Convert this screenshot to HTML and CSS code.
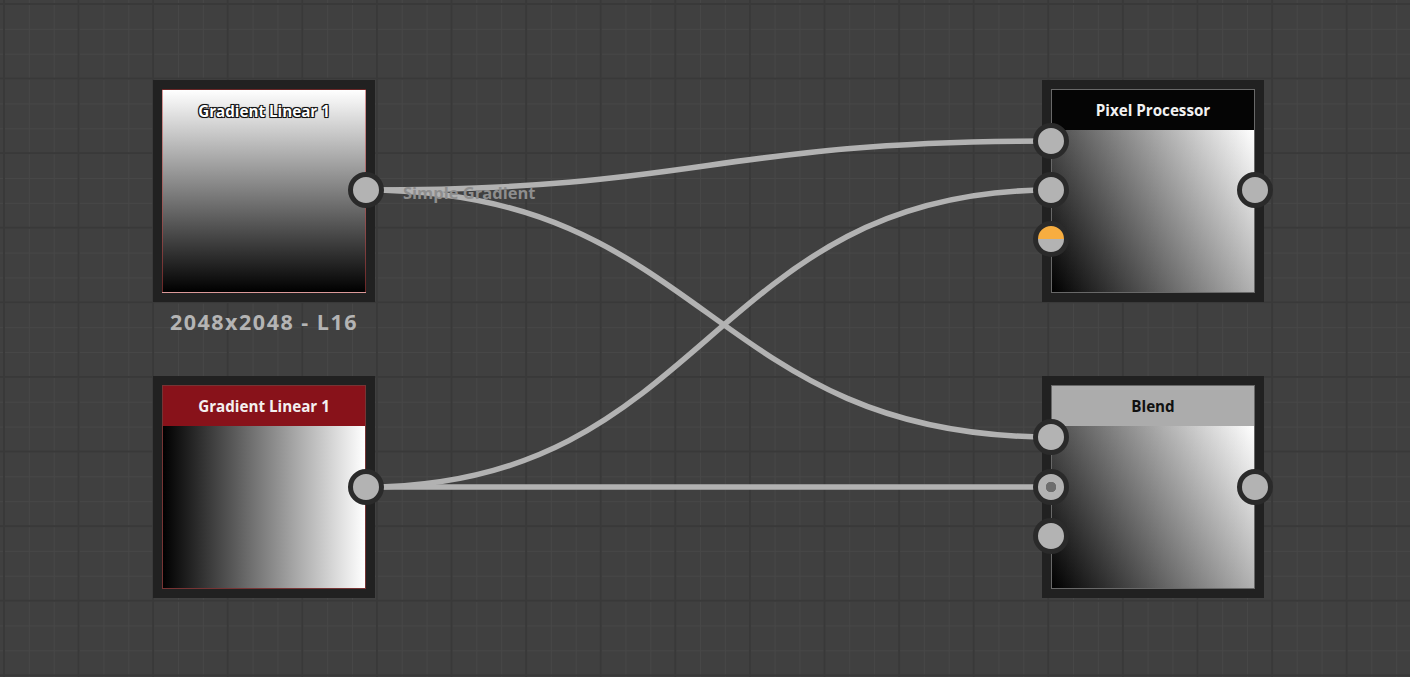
FILE: index.html
```html
<!DOCTYPE html>
<html>
<head>
<meta charset="utf-8">
<link rel="stylesheet" href="styles.css">
</head>
<body>
<div class="canvas">
  <svg class="wires" width="1410" height="677" viewBox="0 0 1410 677">
    <path d="M366 190 C708 190 708 141 1051 141"/>
    <path d="M366 190 C708 190 708 437 1051 437"/>
    <path d="M366 487 C708 487 708 190 1051 190"/>
    <path d="M366 487 L1051 487"/>
  </svg>

  <div class="wire-label">Simple Gradient</div>

  <div class="node n1">
    <div class="preview vgrad red-edge">
      <div class="title overlay">Gradient Linear 1</div>
    </div>
    <span class="socket s-out-mid"></span>
  </div>
  <div class="caption">2048x2048 - L16</div>

  <div class="node n2">
    <div class="body red-edge">
      <div class="header red">Gradient Linear 1</div>
      <div class="image hgrad"></div>
    </div>
    <span class="socket s-out-mid2"></span>
  </div>

  <div class="node n3">
    <div class="body grey-edge">
      <div class="header black">Pixel Processor</div>
      <div class="image dgrad"></div>
    </div>
    <span class="socket s-in1"></span>
    <span class="socket s-in2"></span>
    <span class="socket s-in3 half"></span>
    <span class="socket s-out-mid"></span>
  </div>

  <div class="node n4">
    <div class="body grey-edge">
      <div class="header light">Blend</div>
      <div class="image dgrad"></div>
    </div>
    <span class="socket s-in1"></span>
    <span class="socket s-in2b dot"></span>
    <span class="socket s-in3b"></span>
    <span class="socket s-out-mid2"></span>
  </div>
</div>
</body>
</html>
```

FILE: styles.css
```css
html, body {
  margin: 0;
  padding: 0;
  width: 1410px;
  height: 677px;
  overflow: hidden;
  background: #404040;
  font-family: "Open Sans", "Noto Sans", "DejaVu Sans", sans-serif;
}

.canvas {
  position: relative;
  width: 1410px;
  height: 677px;
  background-color: #404040;
  background-image:
    linear-gradient(to right, #393939 2px, transparent 2px),
    linear-gradient(to bottom, #393939 2px, transparent 2px),
    linear-gradient(to right, #474747 1px, transparent 1px),
    linear-gradient(to bottom, #474747 1px, transparent 1px);
  background-size: 74.6px 74.6px, 74.6px 74.6px, 24.87px 24.87px, 24.87px 24.87px;
  background-position: 3px 3px, 3px 3px, 4px 4px, 4px 4px;
}

.wires {
  position: absolute;
  left: 0;
  top: 0;
}

.wires path {
  fill: none;
  stroke: #b2b2b2;
  stroke-width: 5.5;
}

.wire-label {
  position: absolute;
  left: 403px;
  top: 182px;
  line-height: 22px;
  font-size: 16.5px;
  font-weight: 700;
  color: #8e8e8e;
  white-space: nowrap;
}

.node {
  position: absolute;
  width: 204px;
  height: 204px;
  padding: 9px;
  background: #212121;
}

.n1 { left: 153px; top: 80px; }
.n2 { left: 153px; top: 376px; }
.n3 { left: 1042px; top: 80px; }
.n4 { left: 1042px; top: 376px; }

.preview,
.body {
  width: 204px;
  height: 204px;
  box-sizing: border-box;
}

.body {
  display: flex;
  flex-direction: column;
}

.red-edge { border: 1px solid rgba(190, 70, 70, 0.55); }
.grey-edge { border: 1px solid rgba(190, 190, 190, 0.45); }

.vgrad { background: linear-gradient(to bottom, #ffffff, #000000); }
.hgrad { background: linear-gradient(to right, #000000, #ffffff); }
.dgrad {
  background:
    linear-gradient(to bottom, rgba(255,255,255,0.3), rgba(0,0,0,0.3)),
    linear-gradient(to right, #000000, #ffffff);
}

.image { flex: 1; }

.title,
.header {
  height: 40px;
  line-height: 40px;
  text-align: center;
  font-size: 15.2px;
  font-weight: 700;
  white-space: nowrap;
  flex: none;
}

.title.overlay {
  color: #ffffff;
  line-height: 42px;
  text-shadow: 1px 1px 0 #111, -1px -1px 0 #111, 1px -1px 0 #111, -1px 1px 0 #111, 0 0 2px #000;
}

.header.red { background: #88121a; color: #f4f0f0; }
.header.black { background: #050505; color: #f2f2f2; }
.header.light { background: #acacac; color: #111111; }

.caption {
  position: absolute;
  left: 153px;
  top: 306px;
  width: 222px;
  text-align: center;
  line-height: 32px;
  font-size: 21.5px;
  font-weight: 700;
  letter-spacing: 1.5px;
  color: #b4b4b4;
}

.socket {
  position: absolute;
  width: 26px;
  height: 26px;
  border: 5.5px solid #2a2a2a;
  border-radius: 50%;
  background: #b3b3b3;
  transform: translate(-50%, -50%);
}

.s-out-mid { left: 213px; top: 110px; }
.s-out-mid2 { left: 213px; top: 111px; }
.s-in1 { left: 9px; top: 61px; }
.s-in2 { left: 9px; top: 110px; }
.s-in3 { left: 9px; top: 159px; }
.s-in2b { left: 9px; top: 111px; }
.s-in3b { left: 9px; top: 160px; }

.socket.half {
  background: linear-gradient(to bottom, #f7ad40 0 50%, #b3b3b3 50% 100%);
}

.socket.dot {
  background: radial-gradient(circle, #6e6e6e 0 5px, #b3b3b3 5.5px);
}
```
